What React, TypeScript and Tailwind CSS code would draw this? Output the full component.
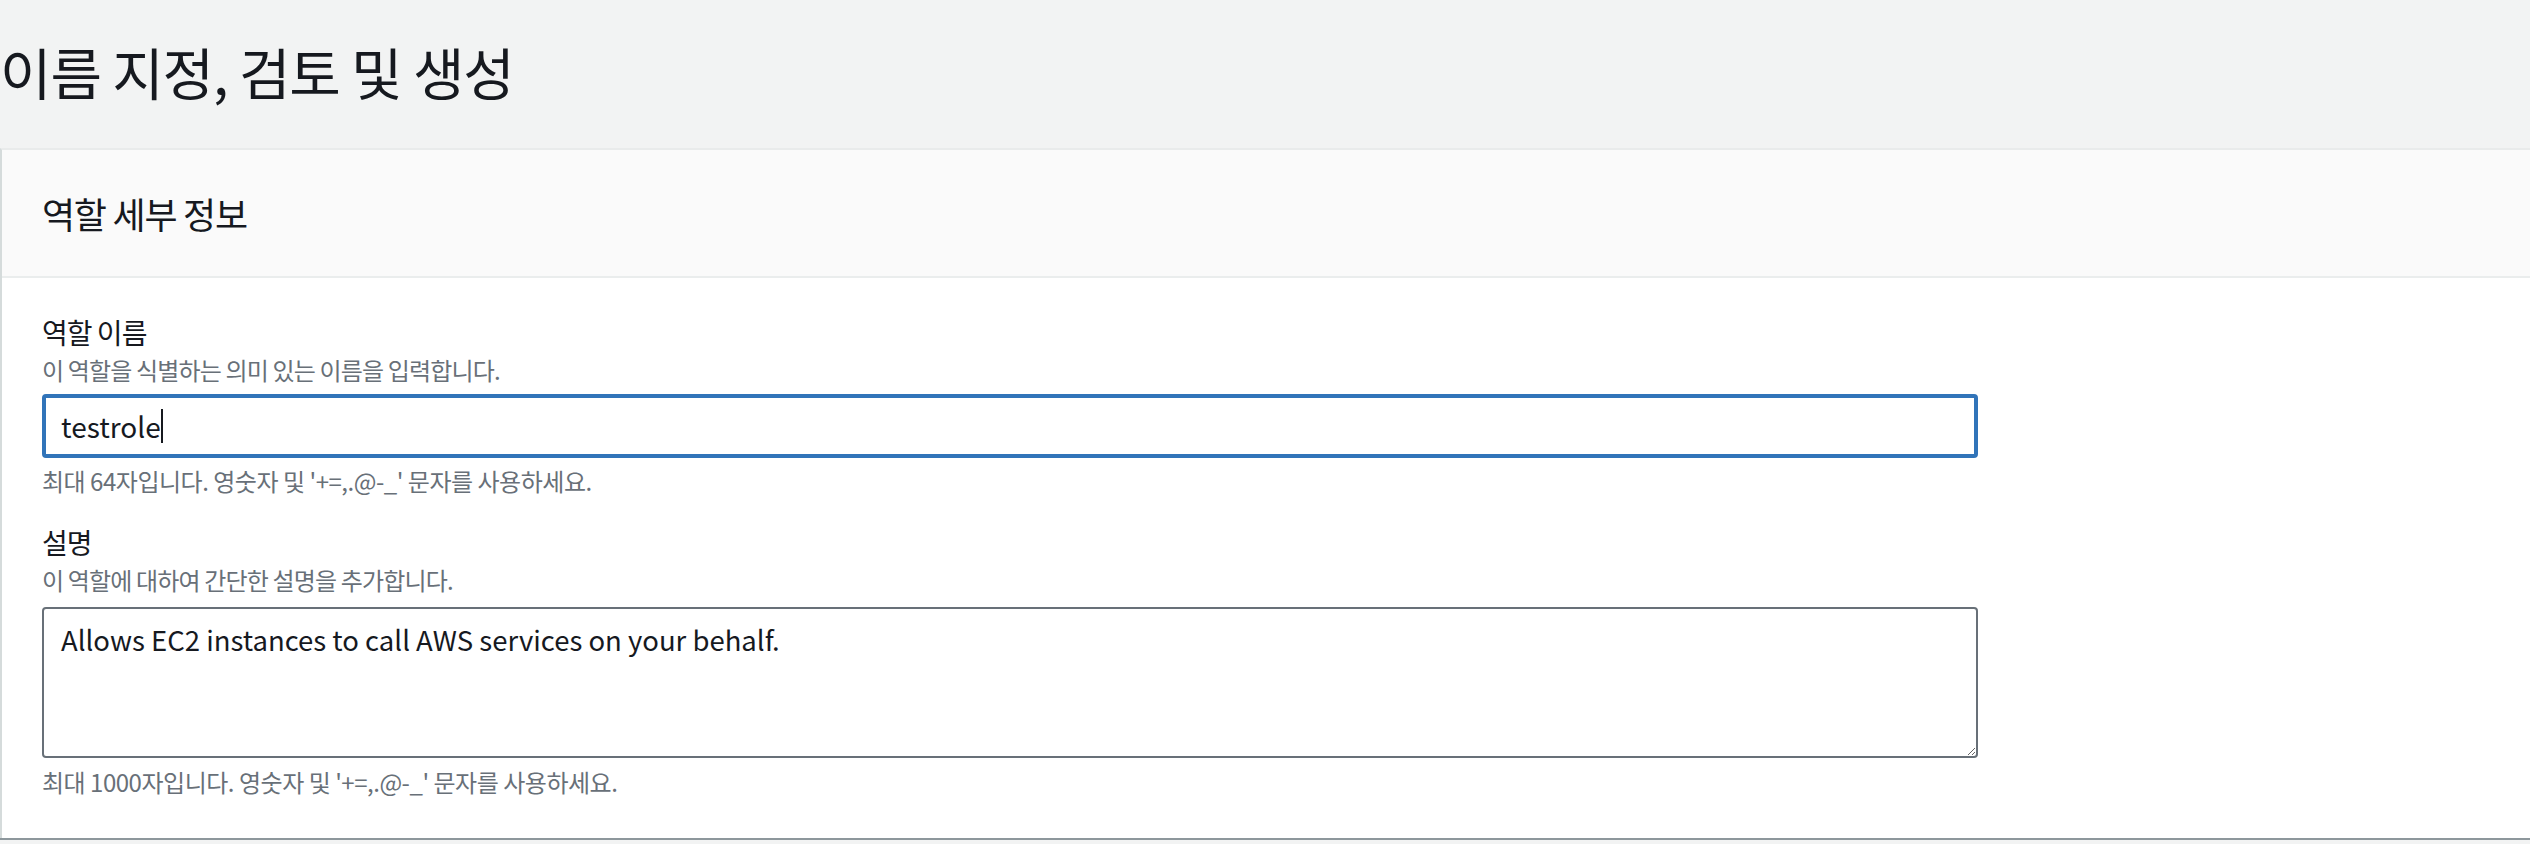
const ko = "tracking-[-0.035em]";

function Field({
  label,
  description,
  constraint,
  children,
}: {
  label: string;
  description: string;
  constraint: string;
  children: React.ReactNode;
}) {
  return (
    <div className="flex flex-col">
      <div className={`text-[28px] leading-[40px] text-[#16191f] ${ko}`}>{label}</div>
      <div className={`mt-[2px] text-[24px] leading-[32px] text-[#687078] ${ko}`}>{description}</div>
      {children}
      <div className="text-[24px] leading-[32px] text-[#687078] tracking-[-0.02em]">{constraint}</div>
    </div>
  );
}

export default function App() {
  return (
    <div className="w-full h-[844px] overflow-hidden bg-[#f2f3f3] font-['Noto_Sans_CJK_KR',sans-serif]">
      {/* Page heading */}
      <div className="h-[148px] flex items-center">
        <h1 className="text-[56px] leading-[64px] text-[#16191f] tracking-[-0.02em] -mt-[6px]">
          이름 지정, 검토 및 생성
        </h1>
      </div>

      {/* Container */}
      <div className="h-[690px] border-t-2 border-l-2 border-t-[#e9ebeb] border-l-[#d5dbdb] bg-white shadow-[0_2px_0_#8d979c]">
        <div className="h-[128px] bg-[#fafafa] border-b-2 border-[#eaeded] flex items-center pl-[40px]">
          <h2 className={`text-[36px] leading-[48px] text-[#16191f] ${ko}`}>역할 세부 정보</h2>
        </div>

        <div className="pl-[40px] pt-[34px] flex flex-col">
          <Field
            label="역할 이름"
            description="이 역할을 식별하는 의미 있는 이름을 입력합니다."
            constraint="최대 64자입니다. 영숫자 및 '+=,.@-_' 문자를 사용하세요."
          >
            <div className="mt-[8px] mb-[7px] w-[1936px] h-[64px] rounded-[4px] border-4 border-[#3174b9] flex items-center pl-[15px] text-[28px] text-[#16191f]">
              testrole
              <span className="w-[2px] h-[34px] bg-[#16191f]" />
            </div>
          </Field>

          <div className="mt-[25px]">
            <Field
              label="설명"
              description="이 역할에 대하여 간단한 설명을 추가합니다."
              constraint="최대 1000자입니다. 영숫자 및 '+=,.@-_' 문자를 사용하세요."
            >
              <textarea
                readOnly
                value="Allows EC2 instances to call AWS services on your behalf."
                className="mt-[11px] mb-[8px] w-[1936px] h-[151px] rounded-[4px] border-2 border-[#687078] bg-white pl-[17px] pt-[10px] text-[27.5px] leading-[40px] text-[#16191f] outline-none font-['Noto_Sans_CJK_KR',sans-serif]"
              />
            </Field>
          </div>
        </div>
      </div>
    </div>
  );
}
